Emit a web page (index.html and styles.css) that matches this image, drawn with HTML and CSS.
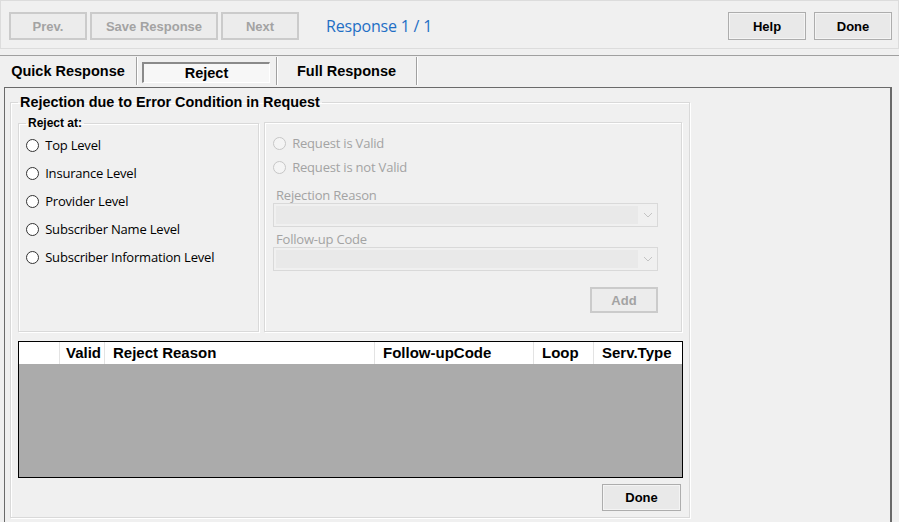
FILE: index.html
```html
<!DOCTYPE html>
<html lang="en">
<head>
    <meta charset="UTF-8">
    <meta name="viewport" content="width=device-width, initial-scale=1.0">
    <title>Response Editor</title>
    <link rel="stylesheet" href="styles.css">
</head>
<body>
    <div class="toolbar">
        <button class="btn" disabled>Prev.</button>
        <button class="btn save-btn" disabled>Save Response</button>
        <button class="btn" disabled>Next</button>
        <span class="counter">Response 1 / 1</span>
        <span class="spacer"></span>
        <button class="btn help-btn">Help</button>
        <button class="btn">Done</button>
    </div>

    <div class="tabs">
        <div class="tab">Quick Response</div>
        <div class="tab tab-wide"><span class="tab-active">Reject</span></div>
        <div class="tab tab-wide">Full Response</div>
    </div>

    <div class="panel">
        <fieldset class="group main-group">
            <legend>Rejection due to Error Condition in Request</legend>
            <div class="group-row">
                <fieldset class="group level-group">
                    <legend>Reject at:</legend>
                    <label class="radio"><input type="radio" name="level"> Top Level</label>
                    <label class="radio"><input type="radio" name="level"> Insurance Level</label>
                    <label class="radio"><input type="radio" name="level"> Provider Level</label>
                    <label class="radio"><input type="radio" name="level"> Subscriber Name Level</label>
                    <label class="radio"><input type="radio" name="level"> Subscriber Information Level</label>
                </fieldset>
                <fieldset class="group detail-group" disabled>
                    <label class="radio"><input type="radio" name="valid"> Request is Valid</label>
                    <label class="radio"><input type="radio" name="valid"> Request is not Valid</label>
                    <div class="field-label">Rejection Reason</div>
                    <div class="combo">
                        <span class="combo-field"></span>
                        <span class="combo-arrow">
                            <svg width="10" height="6" viewBox="0 0 10 6"><path d="M1 1 L5 5 L9 1" fill="none" stroke="#c4c4c4" stroke-width="1"/></svg>
                        </span>
                    </div>
                    <div class="field-label">Follow-up Code</div>
                    <div class="combo">
                        <span class="combo-field"></span>
                        <span class="combo-arrow">
                            <svg width="10" height="6" viewBox="0 0 10 6"><path d="M1 1 L5 5 L9 1" fill="none" stroke="#c4c4c4" stroke-width="1"/></svg>
                        </span>
                    </div>
                    <div class="add-row"><button class="btn add-btn">Add</button></div>
                </fieldset>
            </div>

            <div class="grid">
                <div class="grid-head">
                    <div class="cell c-sel"></div>
                    <div class="cell c-valid">Valid</div>
                    <div class="cell c-reason">Reject Reason</div>
                    <div class="cell c-follow">Follow-upCode</div>
                    <div class="cell c-loop">Loop</div>
                    <div class="cell c-serv">Serv.Type</div>
                </div>
                <div class="grid-body"></div>
            </div>

            <div class="bottom-row"><button class="btn done-btn">Done</button></div>
        </fieldset>
    </div>
</body>
</html>
```

FILE: styles.css
```css
body {
    margin: 0;
    height: 522px;
    overflow: hidden;
    background-color: #f0f0f0;
    font-family: "Liberation Sans", Arial, sans-serif;
    color: #000;
}

/* top toolbar */
.toolbar {
    box-sizing: border-box;
    height: 49px;
    display: flex;
    align-items: flex-start;
    padding: 11px 6px 0 8px;
    border: 1px solid #dcdcdc;
}
.btn {
    box-sizing: border-box;
    width: 78px;
    height: 28px;
    margin: 0;
    padding: 0;
    font-family: "Liberation Sans", Arial, sans-serif;
    font-size: 13px;
    font-weight: bold;
    color: #000;
    background-color: #e9e9e9;
    border: 1px solid #adadad;
    box-shadow: inset 0 0 0 1px #f4f4f4;
}
.btn:disabled,
.detail-group .btn {
    color: #a3a3a3;
    background-color: #ececec;
    border: 2px solid #cbcbcb;
    box-shadow: none;
}
.save-btn {
    width: 128px;
    margin: 0 3px;
}
.counter {
    margin-left: 27px;
    line-height: 28px;
    font-family: "Open Sans", sans-serif;
    font-size: 16px;
    letter-spacing: -0.2px;
    color: #1f6fc5;
}
.spacer {
    flex: 1;
}
.help-btn {
    margin-right: 8px;
}

/* tab strip */
.tabs {
    box-sizing: border-box;
    height: 32px;
    margin-top: 6px;
    display: flex;
    border-top: 1px solid #a0a0a0;
}
.tab {
    width: 136px;
    height: 28px;
    margin-top: 1px;
    display: flex;
    align-items: center;
    justify-content: center;
    border-right: 1px solid #a0a0a0;
    box-shadow: 1px 0 0 #fff;
    font-size: 14.5px;
    font-weight: bold;
}
.tab-wide {
    width: 139px;
}
.tab-active {
    box-sizing: border-box;
    width: 128px;
    height: 21px;
    margin: 2px 1px 0 0;
    display: flex;
    align-items: center;
    justify-content: center;
    background-color: #f7f7f7;
    border-top: 2px solid #8a8a8a;
    border-left: 2px solid #8a8a8a;
    border-right: 1px solid #fff;
    border-bottom: 1px solid #fff;
}

/* main panel */
.panel {
    box-sizing: border-box;
    width: 888px;
    height: 445px;
    margin-left: 4px;
    padding: 6px 0 0 5px;
    border: 1px solid #6a6a6a;
    border-right-width: 2px;
}
.group {
    box-sizing: border-box;
    margin: 0;
    border: 1px solid #d9d9d9;
    box-shadow: 1px 1px 0 #fff, inset 1px 1px 0 #fff;
}
.group legend {
    padding: 0 2px;
    font-weight: bold;
}
.main-group {
    width: 680px;
    height: 424px;
    padding: 6px 6px 0 7px;
}
.main-group > legend {
    font-size: 14.4px;
    line-height: 16px;
}
.group-row {
    display: flex;
    gap: 5px;
}
.level-group {
    width: 241px;
    height: 216px;
    padding: 1px 0 0 7px;
}
.level-group > legend {
    font-size: 12px;
    line-height: 14px;
}
.detail-group {
    width: 418px;
    height: 210px;
    margin-top: 6px;
    padding: 8px 0 0 8px;
}

/* radio buttons */
.radio {
    height: 28px;
    display: flex;
    align-items: center;
    font-family: "Open Sans", sans-serif;
    font-size: 13px;
    letter-spacing: -0.2px;
    white-space: pre;
}
.radio input {
    appearance: none;
    box-sizing: border-box;
    width: 13px;
    height: 13px;
    margin: 0 3px 0 0;
    border: 1px solid #333;
    border-radius: 50%;
    background-color: #fff;
}
.detail-group .radio {
    height: 24px;
    color: #a3a3a3;
}
.detail-group .radio input {
    border-color: #c6c6c6;
    background-color: #f4f4f4;
}
.field-label {
    margin: 8px 0 0 3px;
    line-height: 16px;
    font-family: "Open Sans", sans-serif;
    font-size: 13px;
    letter-spacing: -0.2px;
    color: #a3a3a3;
}
.combo + .field-label {
    margin-top: 4px;
}
.combo {
    box-sizing: border-box;
    width: 385px;
    height: 24px;
    display: flex;
    border: 1px solid #d9d9d9;
    background-color: #f0f0f0;
}
.combo-field {
    flex: 1;
    margin: 2px 0 2px 2px;
    background-color: #e9e9e9;
}
.combo-arrow {
    width: 19px;
    display: flex;
    align-items: center;
    justify-content: center;
}
.add-row {
    width: 385px;
    margin-top: 16px;
    display: flex;
    justify-content: flex-end;
}
.add-btn {
    width: 68px;
    height: 26px;
}

/* results grid */
.grid {
    box-sizing: border-box;
    width: 665px;
    height: 137px;
    margin-top: 9px;
    border: 1px solid #000;
}
.grid-head {
    height: 22px;
    display: flex;
    background-color: #fff;
}
.cell {
    box-sizing: border-box;
    padding-left: 8px;
    line-height: 22px;
    font-size: 15px;
    font-weight: bold;
    border-right: 1px solid #e3e3e3;
}
.c-sel { width: 41px; }
.c-valid { width: 45px; padding-left: 6px; }
.c-reason { width: 270px; }
.c-follow { width: 159px; }
.c-loop { width: 60px; }
.c-serv { width: 88px; border-right: none; }
.grid-body {
    height: 113px;
    background-color: #ababab;
}
.bottom-row {
    margin-top: 6px;
    display: flex;
    justify-content: flex-end;
}
.done-btn {
    width: 79px;
    height: 27px;
    margin-right: 2px;
}
```
